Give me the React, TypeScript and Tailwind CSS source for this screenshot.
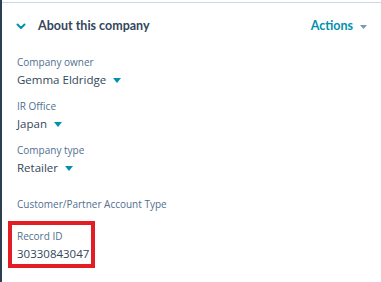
const font = { fontFamily: '"Open Sans", "Lato", sans-serif' };
const heading = { fontFamily: '"Lato", "Open Sans", sans-serif' };

const Caret = ({ color = '#0091ae', small }: { color?: string; small?: boolean }) =>
  small ? (
    <svg width="7" height="4" viewBox="0 0 7 4" className="ml-[7px] mt-[1px]">
      <path d="M0 0 L7 0 L3.5 4 Z" fill={color} />
    </svg>
  ) : (
    <svg width="8" height="5" viewBox="0 0 8 5" className="ml-[7px] mt-[1px]">
      <path d="M0 0 L8 0 L4 5 Z" fill={color} />
    </svg>
  );

const Field = ({ label, value }: { label: string; value?: string }) => (
  <div className="flex flex-col">
    <div className="text-[10px] leading-[18px] text-[#516f90]">{label}</div>
    {value && (
      <div className="flex items-center text-[11.5px] leading-[18px] text-[#33475b]">
        {value}
        <Caret />
      </div>
    )}
  </div>
);

export default function App() {
  return (
    <div
      className="w-[381px] h-[282px] bg-white border-l-2 border-[#2d3e50] overflow-hidden pt-[2px]"
      style={font}
    >
      <div className="border-t border-[#cbd6e2]">
        <div className="flex items-center h-[42px] pt-[4px] pl-[14px] pr-[14px]" style={heading}>
          <svg width="10" height="7" viewBox="0 0 10 7">
            <path
              d="M1.5 1.5 L5 5 L8.5 1.5"
              fill="none"
              stroke="#0091ae"
              strokeWidth="2"
              strokeLinecap="round"
              strokeLinejoin="round"
            />
          </svg>
          <div className="ml-[12px] text-[12.5px] font-bold text-[#33475b]">
            About this company
          </div>
          <div className="ml-auto flex items-center text-[12.5px] font-bold text-[#0091ae]">
            Actions
            <Caret color="#7c98b6" small />
          </div>
        </div>

        <div className="flex flex-col gap-[8px] pl-[15px] pt-[8px]">
          <Field label="Company owner" value="Gemma Eldridge" />
          <Field label="IR Office" value="Japan" />
          <Field label="Company type" value="Retailer" />
          <div className="pt-[10px]">
            <Field label="Customer/Partner Account Type" />
          </div>
          <div className="-ml-[9px] w-[87px] border-4 border-[#e41c24] pl-[5px] pt-[2px] pb-[2px]">
            <div className="text-[10px] leading-[18px] text-[#516f90]">Record ID</div>
            <div className="text-[11.5px] leading-[17px] text-[#33475b]">30330843047</div>
          </div>
        </div>
      </div>
    </div>
  );
}
